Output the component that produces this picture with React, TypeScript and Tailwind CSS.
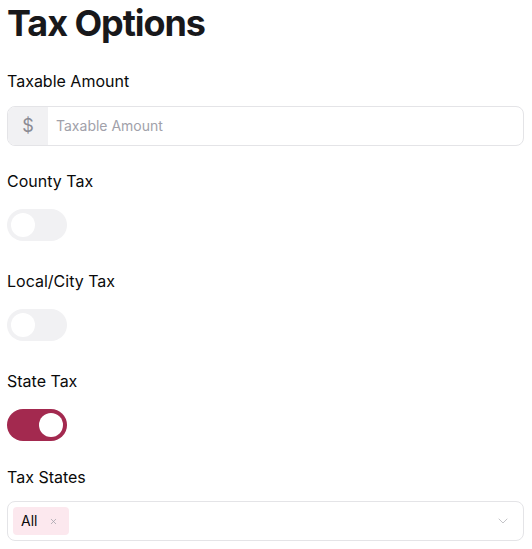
import { ChevronDown, X } from 'lucide-react';

function Toggle({ on }: { on?: boolean }) {
  return (
    <div className="h-10 flex items-center">
      <div
        className={
          'w-[60px] h-8 rounded-full flex items-center px-1 ' +
          (on ? 'bg-[#a3294f] justify-end' : 'bg-[#f1f1f3] justify-start')
        }
      >
        <div className="w-6 h-6 rounded-full bg-white" />
      </div>
    </div>
  );
}

export default function App() {
  return (
    <div className="px-[7px] pr-2 font-['Inter',sans-serif] text-[#0a0a0a]">
      <h1 className="text-4xl font-bold leading-[46px] tracking-[-0.03em] text-[#18181b]">Tax Options</h1>

      <div className="mt-[23px]">
        <label className="block text-base font-normal leading-6">Taxable Amount</label>
        <div className="mt-[13px] h-10 flex border border-[#e4e4e7] rounded-lg overflow-hidden">
          <div className="w-10 bg-[#f1f1f3] flex items-center justify-center text-[#8a8a93] text-lg">
            $
          </div>
          <input
            className="flex-1 px-2 text-sm outline-none placeholder:text-[#a1a1aa]"
            placeholder="Taxable Amount"
          />
        </div>
      </div>

      <div className="mt-[23px]">
        <label className="block text-base font-normal leading-6">County Tax</label>
        <div className="mt-3">
          <Toggle />
        </div>
      </div>

      <div className="mt-6">
        <label className="block text-base font-normal leading-6">Local/City Tax</label>
        <div className="mt-3">
          <Toggle />
        </div>
      </div>

      <div className="mt-6">
        <label className="block text-base font-normal leading-6">State Tax</label>
        <div className="mt-3">
          <Toggle on />
        </div>
      </div>

      <div className="mt-5">
        <label className="block text-base font-normal leading-6">Tax States</label>
        <div className="mt-3 h-10 flex items-center border border-[#e4e4e7] rounded-lg pl-[5px] pr-3">
          <div className="h-7 flex items-center gap-[12px] bg-[#fce8ee] rounded pl-2 pr-[11px] text-sm">
            <span>All</span>
            <X className="w-[9px] h-[9px] text-[#a1a1aa]" strokeWidth={2} />
          </div>
          <div className="flex-1" />
          <ChevronDown className="w-4 h-4 text-[#c4c4c8]" strokeWidth={1.5} />
        </div>
      </div>
    </div>
  );
}
